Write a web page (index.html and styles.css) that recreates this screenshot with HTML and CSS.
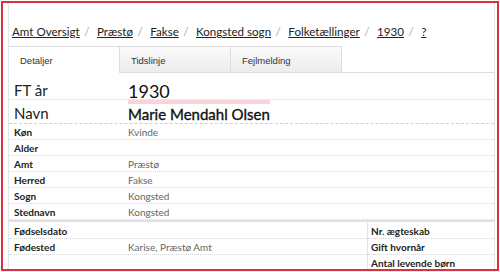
FILE: index.html
```html
<!DOCTYPE html>
<html lang="da">
  <head>
    <meta charset="UTF-8" />
    <title>Kongsted sogn 1930</title>
    <link rel="stylesheet" href="styles.css">
  </head>
  <body>
    <div class="frame">
      <div class="page">
        <nav class="crumbs">
          <a href="#">Amt Oversigt</a><span class="sep">/</span>
          <a href="#">Præstø</a><span class="sep">/</span>
          <a href="#">Fakse</a><span class="sep">/</span>
          <a href="#">Kongsted sogn</a><span class="sep">/</span>
          <a href="#">Folketællinger</a><span class="sep">/</span>
          <a href="#">1930</a><span class="sep">/</span>
          <a href="#">?</a>
        </nav>

        <div class="tabs">
          <div class="tab active">Detaljer</div>
          <div class="tab">Tidslinje</div>
          <div class="tab">Fejlmelding</div>
          <div class="tab-rest"></div>
        </div>

        <div class="details">
          <div class="row big">
            <div class="label">FT år</div>
            <div class="value year">1930</div>
          </div>
          <div class="row big name-row">
            <div class="label">Navn</div>
            <div class="value"><span class="name">Marie Mendahl Olsen</span></div>
          </div>
          <div class="row"><div class="label">Køn</div><div class="value">Kvinde</div></div>
          <div class="row"><div class="label">Alder</div><div class="value"></div></div>
          <div class="row"><div class="label">Amt</div><div class="value">Præstø</div></div>
          <div class="row"><div class="label">Herred</div><div class="value">Fakse</div></div>
          <div class="row"><div class="label">Sogn</div><div class="value">Kongsted</div></div>
          <div class="row"><div class="label">Stednavn</div><div class="value">Kongsted</div></div>

          <div class="split">
            <div class="left">
              <div class="row"><div class="label">Fødselsdato</div><div class="value"></div></div>
              <div class="row"><div class="label">Fødested</div><div class="value">Karise, Præstø Amt</div></div>
            </div>
            <div class="right">
              <div class="row"><div class="label">Nr. ægteskab</div></div>
              <div class="row"><div class="label">Gift hvornår</div></div>
              <div class="row"><div class="label">Antal levende børn</div></div>
            </div>
          </div>
        </div>
      </div>
    </div>
  </body>
</html>
```

FILE: styles.css
```css
* {
  margin: 0;
  padding: 0;
  box-sizing: border-box;
}

body {
  font-family: Lato, "Open Sans", sans-serif;
  background: white;
  color: #222;
  width: 500px;
  height: 272px;
  overflow: hidden;
  padding: 1px;
}

.frame {
  border: 2px solid #d8323e;
  height: 270px;
  padding: 0 2px 0 5px;
  overflow: hidden;
}

.page {
  border-left: 1px solid #e6e6e6;
  border-right: 1px solid #e6e6e6;
  height: 100%;
}

.crumbs {
  padding: 21px 0 0 3px;
  height: 43px;
  font-size: 11.6px;
  line-height: 15px;
  white-space: nowrap;
}

.crumbs a {
  color: #222;
  text-decoration: underline;
}

.crumbs .sep {
  color: #aaa;
  margin: 0 4.5px;
}

.tabs {
  display: flex;
  height: 27px;
}

.tab {
  width: 111px;
  padding: 8px 0 0 11px;
  font-family: "Liberation Sans", sans-serif;
  font-size: 9.5px;
  color: #333;
  border: 1px solid #ddd;
  border-left: none;
  background: linear-gradient(#fbfbfb, #ececec);
}

.tab.active {
  background: white;
  border-bottom: none;
}

.tab-rest {
  flex: 1;
  border-bottom: 1px solid #ddd;
}

.row {
  display: grid;
  grid-template-columns: 119px 1fr;
  height: 16px;
  align-items: center;
  border-bottom: 1px dotted #d6d6d6;
  font-size: 10px;
}

.label {
  padding-left: 5px;
  font-weight: 700;
  color: #222;
}

.value {
  color: #666;
}

.row.big {
  height: 27px;
  font-size: 15px;
  padding-top: 4px;
  border-bottom: 1px solid #e8e8e8;
}

.row.big .label {
  font-weight: 400;
}

.row.name-row {
  height: 24px;
  padding-top: 0;
  align-items: end;
  border-bottom: 1px dashed #cfcfcf;
}

.row.name-row .label {
  padding-bottom: 2px;
}

.year {
  font-size: 18px;
  color: #111;
  padding-top: 3px;
}

.name {
  font-size: 15px;
  font-weight: 400;
  color: #111;
  border-top: 4px solid #f9d5d9;
  display: inline-block;
  line-height: 19px;
  padding-top: 1px;
  -webkit-text-stroke: 0.35px #111;
}

.split {
  display: grid;
  grid-template-columns: 358px 1fr;
  border-top: 2px solid #e2e2e2;
  padding-top: 1px;
}

.right {
  border-left: 1px solid #e2e2e2;
}

.right .row {
  grid-template-columns: 1fr;
}

.right .label {
  padding-left: 3px;
}
```
